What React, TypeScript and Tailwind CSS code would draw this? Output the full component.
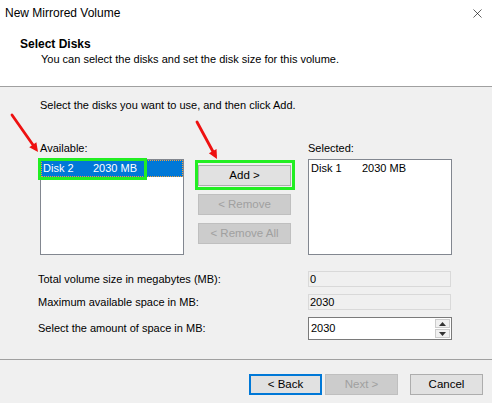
import { X } from "lucide-react";

const font = { fontFamily: '"Liberation Sans", Arial, sans-serif' };

function Arrow({ x1, y1, x2, y2 }: { x1: number; y1: number; x2: number; y2: number }) {
  const ang = Math.atan2(y2 - y1, x2 - x1);
  const len = 10;
  const a1 = ang + Math.PI - 0.45;
  const a2 = ang + Math.PI + 0.45;
  const p = `${x2},${y2} ${x2 + len * Math.cos(a1)},${y2 + len * Math.sin(a1)} ${x2 + len * Math.cos(a2)},${y2 + len * Math.sin(a2)}`;
  return (
    <g>
      <line x1={x1} y1={y1} x2={x2 - 4 * Math.cos(ang)} y2={y2 - 4 * Math.sin(ang)} stroke="#ee1111" strokeWidth="2.8" strokeLinecap="round" />
      <polygon points={p} fill="#ee1111" />
    </g>
  );
}

function Btn({ label, disabled, focus, className = "" }: { label: string; disabled?: boolean; focus?: boolean; className?: string }) {
  return (
    <div
      className={`h-[21px] flex items-center justify-center text-[11.5px] border ${
        disabled ? "bg-[#cccccc] border-[#bfbfbf] text-[#a0a0a0]" : focus ? "bg-[#e1e1e1] border-[#0078d7] border-2 text-black" : "bg-[#e1e1e1] border-[#adadad] text-black"
      } ${className}`}
    >
      {label}
    </div>
  );
}

export default function App() {
  return (
    <div style={font} className="relative w-[492px] h-[403px] bg-[#f0f0f0] overflow-hidden text-[11px] text-black leading-[15px]">
      <header className="h-[87px] bg-white border-b border-[#a0a0a0]">
        <div className="h-[26px] flex items-center justify-between pl-[5px] pr-[7px]">
          <span className="text-[12px]">New Mirrored Volume</span>
          <X size={15} strokeWidth={1} />
        </div>
        <div className="pl-[20px] pt-[11px] font-bold text-[12px]">Select Disks</div>
        <div className="pl-[41px]">You can select the disks and set the disk size for this volume.</div>
      </header>

      <main className="pl-[40px] pr-[40px]">
        <p className="pt-[11px]">Select the disks you want to use, and then click Add.</p>

        <div className="flex mt-[28px]">
          <section className="w-[144px]">
            <div className="h-[18px]">Available:</div>
            <div className="relative h-[96px] bg-white border border-[#828790]">
              <div className="h-[17px] flex items-center bg-[#0078d7] text-white border border-dotted border-[#f0a040] pl-[1px]">
                <span className="w-[50px]">Disk 2</span>
                <span>2030 MB</span>
              </div>
              <div className="absolute left-[-3px] top-[-2px] w-[109px] h-[22px] border-[3px] border-[#22ee22]" />
            </div>
          </section>

          <section className="w-[93px] ml-[14px] pt-[24px] flex flex-col gap-[8px]">
            <div className="relative">
              <Btn label="Add >" />
              <div className="absolute left-[-3px] top-[-5px] w-[100px] h-[30px] border-[3px] border-[#22ee22]" />
            </div>
            <Btn label="< Remove" disabled />
            <Btn label="< Remove All" disabled />
          </section>

          <section className="w-[144px] ml-[17px]">
            <div className="h-[18px]">Selected:</div>
            <div className="h-[96px] bg-white border border-[#828790]">
              <div className="h-[17px] flex items-center pl-[2px]">
                <span className="w-[51px]">Disk 1</span>
                <span>2030 MB</span>
              </div>
            </div>
          </section>
        </div>

        <div className="mt-[16px] flex flex-col gap-[7px] ml-[-2px]">
          <div className="flex items-center h-[16px]">
            <span className="w-[270px]">Total volume size in megabytes (MB):</span>
            <div className="w-[143px] h-[16px] border border-[#d9d9d9] flex items-center pl-[1px]">0</div>
          </div>
          <div className="flex items-center h-[16px]">
            <span className="w-[270px]">Maximum available space in MB:</span>
            <div className="w-[143px] h-[16px] border border-[#d9d9d9] flex items-center pl-[1px]">2030</div>
          </div>
          <div className="flex items-center h-[23px]">
            <span className="w-[270px]">Select the amount of space in MB:</span>
            <div className="w-[144px] h-[23px] border border-[#7a7a7a] bg-white flex items-center justify-between pl-[2px]">
              <span>2030</span>
              <div className="flex flex-col h-full py-[1px] pr-[1px] gap-[1px]">
                <div className="flex-1 w-[15px] bg-[#f0f0f0] border border-[#cccccc] flex items-center justify-center">
                  <svg width="7" height="4" viewBox="0 0 7 4"><polygon points="0,4 7,4 3.5,0" fill="#333" /></svg>
                </div>
                <div className="flex-1 w-[15px] bg-[#f0f0f0] border border-[#cccccc] flex items-center justify-center">
                  <svg width="7" height="4" viewBox="0 0 7 4"><polygon points="0,0 7,0 3.5,4" fill="#333" /></svg>
                </div>
              </div>
            </div>
          </div>
        </div>
      </main>

      <footer className="mt-[19px] border-t border-[#a0a0a0] flex justify-end pt-[14px] pr-[9px]">
        <Btn label="< Back" focus className="w-[73px]" />
        <Btn label="Next >" disabled className="w-[73px] ml-[3px]" />
        <Btn label="Cancel" className="w-[73px] ml-[12px]" />
      </footer>

      <svg className="absolute inset-0 pointer-events-none" width="492" height="403">
        <Arrow x1={12} y1={115} x2={38} y2={152} />
        <Arrow x1={197} y1={122} x2={217} y2={159} />
      </svg>
    </div>
  );
}
